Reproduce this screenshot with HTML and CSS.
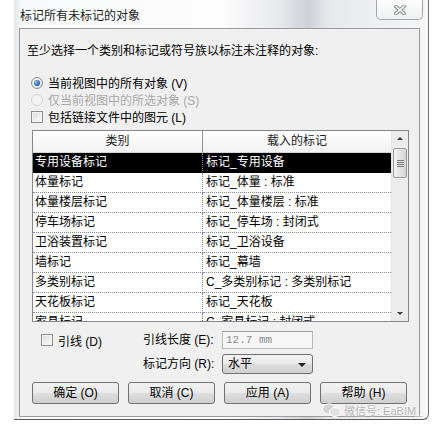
FILE: index.html
```html
<!DOCTYPE html>
<html lang="zh-CN">

<head>
  <meta charset="UTF-8" />
  <title>标记所有未标记的对象</title>
  <link rel="stylesheet" href="styles.css">
</head>

<body>
  <div class="window">
    <div class="titlebar">
      <span class="title">标记所有未标记的对象</span>
      <div class="close">
        <svg width="12" height="10" viewBox="0 0 12 10">
          <path d="M2 1.5 L10 8.5 M10 1.5 L2 8.5" stroke="#8a8a8a" stroke-width="3.6" stroke-linecap="square" fill="none" />
          <path d="M2 1.5 L10 8.5 M10 1.5 L2 8.5" stroke="#fbfbfb" stroke-width="1.6" stroke-linecap="square" fill="none" />
        </svg>
      </div>
    </div>

    <div class="client">
      <p class="prompt">至少选择一个类别和标记或符号族以标注未注释的对象:</p>

      <div class="options">
        <div class="opt"><span class="radio checked"></span>当前视图中的所有对象 (V)</div>
        <div class="opt disabled"><span class="radio"></span>仅当前视图中的所选对象 (S)</div>
        <div class="opt"><span class="check"></span>包括链接文件中的图元 (L)</div>
      </div>

      <div class="list">
        <div class="grid">
          <div class="row head">
            <div class="cell">类别</div>
            <div class="cell">载入的标记</div>
          </div>
          <div class="row selected">
            <div class="cell">专用设备标记</div>
            <div class="cell">标记_专用设备</div>
          </div>
          <div class="row">
            <div class="cell">体量标记</div>
            <div class="cell">标记_体量 : 标准</div>
          </div>
          <div class="row">
            <div class="cell">体量楼层标记</div>
            <div class="cell">标记_体量楼层 : 标准</div>
          </div>
          <div class="row">
            <div class="cell">停车场标记</div>
            <div class="cell">标记_停车场 : 封闭式</div>
          </div>
          <div class="row">
            <div class="cell">卫浴装置标记</div>
            <div class="cell">标记_卫浴设备</div>
          </div>
          <div class="row">
            <div class="cell">墙标记</div>
            <div class="cell">标记_幕墙</div>
          </div>
          <div class="row">
            <div class="cell">多类别标记</div>
            <div class="cell">C_多类别标记 : 多类别标记</div>
          </div>
          <div class="row">
            <div class="cell">天花板标记</div>
            <div class="cell">标记_天花板</div>
          </div>
          <div class="row">
            <div class="cell">家具标记</div>
            <div class="cell">C_家具标记 : 封闭式</div>
          </div>
        </div>

        <div class="scrollbar">
          <div class="arrow up"></div>
          <div class="track">
            <div class="thumb"><span></span><span></span><span></span><span></span></div>
          </div>
          <div class="arrow down"></div>
        </div>
      </div>

      <div class="settings">
        <div class="leader"><span class="check"></span>引线 (D)</div>
        <div class="label">引线长度 (E):</div>
        <div class="input">12.7 mm</div>
        <div class="label row2">标记方向 (R):</div>
        <div class="select row2">水平<span class="caret"></span></div>
      </div>

      <div class="buttons">
        <div class="btn">确定 (O)</div>
        <div class="btn">取消 (C)</div>
        <div class="btn">应用 (A)</div>
        <div class="btn">帮助 (H)</div>
      </div>
    </div>

    <div class="watermark">
      <svg width="20" height="15" viewBox="0 0 20 15">
        <ellipse cx="7" cy="6" rx="6.5" ry="5.2" fill="#d4d4d4" stroke="#fff" stroke-width="1" />
        <ellipse cx="13" cy="9" rx="5.5" ry="4.5" fill="#e2e2e2" stroke="#fff" stroke-width="1" />
      </svg>
      <span>微信号: EaBIM_</span>
    </div>
  </div>
</body>

</html>
```

FILE: styles.css
```css
* {
  box-sizing: border-box;
  margin: 0;
  padding: 0;
}

body {
  font-family: "Liberation Sans", "Noto Sans CJK SC", sans-serif;
  font-size: 12px;
  color: #000;
  background: #fff;
  width: 442px;
  height: 428px;
  overflow: hidden;
}

/* window frame */
.window {
  position: relative;
  width: 415px;
  height: 420px;
  margin-left: 14px;
  border-right: 1px solid #707070;
  border-bottom: 1px solid #5a5a5a;
  border-bottom-right-radius: 6px;
  background: linear-gradient(to right, #dfe7ec 0, #f8f9fa 2%, #fdfdfd 50%, #e8e9ee 64%, #cfd0d8 71%, #e6e8ec 76%, #f6f7f9 100%);
}

.titlebar {
  display: flex;
  justify-content: space-between;
  height: 28px;
  padding: 0 5px 0 6px;
}

.title {
  margin-top: 8px;
  line-height: 16px;
  color: #1a1a1a;
}

.close {
  width: 47px;
  height: 20px;
  display: flex;
  align-items: center;
  justify-content: center;
  border: 1px solid #a5a5a5;
  border-top: none;
  border-radius: 0 0 5px 5px;
  background: linear-gradient(#fdfdfd, #eef0f2);
}

/* client area */
.client {
  width: 401px;
  height: 389px;
  margin-left: 5px;
  border: 1px solid #9a9a9a;
  background: #f0f0f0;
}

.prompt {
  margin: 14px 0 0 7px;
  line-height: 16px;
}

.options {
  margin-top: 15px;
  padding-left: 11px;
}

.opt {
  display: flex;
  align-items: center;
  gap: 5px;
  height: 17px;
}

.opt.disabled {
  color: #a8a8a8;
}

.radio {
  width: 12px;
  height: 12px;
  border-radius: 50%;
  border: 1px solid #8e8f8f;
  background: radial-gradient(circle at 40% 40%, #fff, #dcdcdc);
  position: relative;
}

.radio.checked::after {
  content: "";
  position: absolute;
  left: 2px;
  top: 2px;
  width: 6px;
  height: 6px;
  border-radius: 50%;
  background: radial-gradient(circle at 35% 35%, #8fc4f2, #1d5aa8 70%);
}

.opt.disabled .radio {
  border-color: #d2d2d2;
  background: #f4f4f4;
}

.check {
  width: 12px;
  height: 12px;
  border: 1px solid #8e8f8f;
  background: linear-gradient(135deg, #dcdcdc, #fbfbfb);
  box-shadow: inset 0 0 0 1px #f4f4f4;
}

/* list view */
.list {
  display: flex;
  width: 377px;
  height: 192px;
  margin: 5px 0 0 12px;
  border: 1px solid #82878f;
  background: #fff;
}

.grid {
  width: 358px;
  overflow: hidden;
}

.row {
  display: grid;
  grid-template-columns: 170px 188px;
  height: 20px;
}

.cell {
  line-height: 19px;
  padding-left: 2px;
  white-space: nowrap;
  border-bottom: 1px dotted #8a8a8a;
}

.cell:first-child {
  border-right: 1px dotted #8a8a8a;
}

.cell:last-child {
  padding-left: 3px;
}

.row.head {
  height: 22px;
}

.head .cell {
  line-height: 21px;
  text-align: center;
  padding: 0;
  color: #222;
  background: linear-gradient(#ffffff, #f2f2f2);
  border-bottom: 1px solid #d5d5d5;
}

.head .cell:first-child {
  border-right: 1px solid #8f8f8f;
}

.row.selected {
  background: #000;
  color: #fff;
}

.selected .cell {
  border-bottom-color: #000;
}

.scrollbar {
  width: 17px;
  display: flex;
  flex-direction: column;
  border-left: 1px solid #e4e4e4;
  background: #ececec;
}

.arrow {
  height: 17px;
  position: relative;
}

.arrow::after {
  content: "";
  position: absolute;
  left: 5px;
  top: 6px;
  border-left: 3px solid transparent;
  border-right: 3px solid transparent;
}

.arrow.up::after {
  border-bottom: 3px solid #3a3a3a;
}

.arrow.down::after {
  top: 8px;
  border-top: 3px solid #3a3a3a;
}

.track {
  flex: 1;
  padding: 0 1px 0 1px;
}

.thumb {
  height: 30px;
  border: 1px solid #9a9a9a;
  border-radius: 2px;
  background: linear-gradient(to right, #f4f4f4, #e2e2e2 60%, #d4d4d4);
  display: flex;
  flex-direction: column;
  align-items: center;
  justify-content: center;
  gap: 1px;
}

.thumb span {
  width: 7px;
  height: 1px;
  background: #7a7a7a;
}

/* leader settings */
.settings {
  display: grid;
  grid-template-columns: 123px 79px 91px;
  grid-template-rows: 18px 20px;
  row-gap: 5px;
  margin-top: 9px;
}

.leader {
  display: flex;
  align-items: center;
  gap: 5px;
  padding-left: 21px;
}

.label {
  line-height: 18px;
}

.label.row2 {
  grid-column: 2;
  line-height: 20px;
}

.input {
  border: 1px solid #b8bac0;
  border-top-color: #a0a2a8;
  background: #f6f6f6;
  color: #8a8a8a;
  font-family: "Liberation Mono", monospace;
  font-size: 11px;
  line-height: 16px;
  padding-left: 3px;
}

.select {
  grid-column: 3;
  position: relative;
  border: 1px solid #707070;
  border-radius: 3px;
  background: linear-gradient(#f2f2f2 0%, #ebebeb 50%, #dddddd 51%, #cfcfcf 100%);
  line-height: 18px;
  padding-left: 5px;
}

.caret {
  position: absolute;
  right: 6px;
  top: 8px;
  border-left: 4px solid transparent;
  border-right: 4px solid transparent;
  border-top: 4px solid #222;
}

/* dialog buttons */
.buttons {
  display: flex;
  gap: 9px;
  margin: 8px 0 0 12px;
}

.btn {
  width: 87px;
  height: 22px;
  line-height: 20px;
  text-align: center;
  border: 1px solid #707070;
  border-radius: 3px;
  background: linear-gradient(#f2f2f2 0%, #ebebeb 50%, #dddddd 51%, #cfcfcf 100%);
}

.watermark {
  position: absolute;
  left: 308px;
  top: 402px;
  display: flex;
  align-items: center;
  gap: 2px;
  font-size: 11px;
  color: #b4b4b4;
  text-shadow: 0 0 2px #fff, 0 0 1px #fff;
}
```
